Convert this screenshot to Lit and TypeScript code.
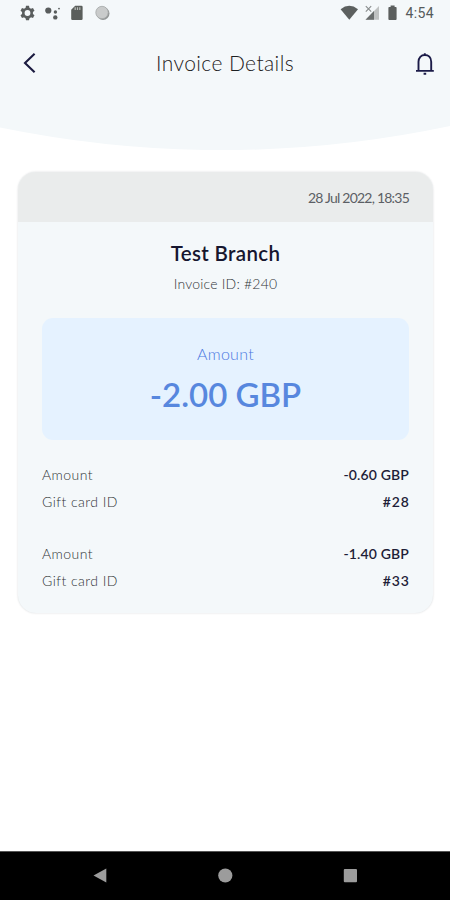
import { LitElement, html, css, svg } from "lit";
import { customElement } from "lit/decorators.js";

interface Entry {
  amount: string;
  card: string;
}

const entries: Entry[] = [
  { amount: "-0.60 GBP", card: "#28" },
  { amount: "-1.40 GBP", card: "#33" },
];

const gearTeeth = [0, 60, 120, 180, 240, 300];

@customElement("status-bar")
class StatusBar extends LitElement {
  static styles = css`
    :host { display: flex; justify-content: space-between; height: 26px; }
    svg { display: block; flex: none; }
    .left { display: flex; padding: 5px 0 0 19px; gap: 9px; }
    .right { display: flex; padding: 5px 16px 0 0; }
    .wifi { margin-right: 6px; }
    .signal { margin-right: 8px; }
    .battery { margin-right: 8px; }
    .time { font: 400 14px/17px Roboto, sans-serif; color: #565b5b; letter-spacing: 0.4px; }
  `;
  render() {
    return html`
      <div class="left">
        <svg width="16" height="16" viewBox="0 0 16 16">
          <circle cx="8.5" cy="8" r="4.2" fill="none" stroke="#5a5e5e" stroke-width="2.6" />
          ${gearTeeth.map(
            (a) => svg`<path d="M6.500 3.600 7 .8h3l.5 2.8z" fill="#5a5e5e" transform="rotate(${a} 8.5 8)" />`
          )}
        </svg>
        <svg width="16" height="16" viewBox="0 0 16 16" fill="#595d5d">
          <circle cx="4.3" cy="5.5" r="3.1" /><circle cx="11.4" cy="7" r="1.7" />
          <circle cx="15" cy="3.6" r="0.9" /><circle cx="11.3" cy="12.4" r="2.2" />
        </svg>
        <svg width="16" height="16" viewBox="0 0 16 16">
          <path d="M6.2.8h6.2q1.2 0 1.2 1.2v11.7q0 1.2-1.2 1.2H3.400q-1.200 0-1.200-1.200V4.800z" fill="#5a5e5b" />
          <path d="M6.200 2.300v2.600M8.500 2.300v2.600M10.800 2.300v2.600" stroke="#b9bdba" stroke-width="1.200" />
        </svg>
        <svg width="17" height="16" viewBox="0 0 17 16">
          <circle cx="9" cy="8.500" r="6.500" fill="#929595" />
          <circle cx="8" cy="7.500" r="6.200" fill="#c9cbcb" stroke="#a5a8a8" stroke-width="0.800" />
        </svg>
      </div>
      <div class="right">
        <svg class="wifi" width="19" height="16" viewBox="0 0 19 16">
          <path d="M.6 4.200Q9.300-2.600 18 4.200L9.300 14.800z" fill="#5c605f" />
        </svg>
        <svg class="signal" width="15" height="16" viewBox="0 0 15 16">
          <path d="M14 1V14.800H.5z" fill="#bfc2c2" />
          <path d="M9 6V14.800H.5z" fill="#6a6e6e" />
          <path d="M.8 1.200l5.400 5.400M6.200 1.200.8 6.600" stroke="#888c8c" stroke-width="1.100" />
        </svg>
        <svg class="battery" width="9" height="16" viewBox="0 0 9 16">
          <path d="M2.600.5h4v1.500h1.200q.8 0 .8.800v11.200q0 .9-.9.900H1.300q-.9 0-.9-.9V2.800q0-.8.800-.8h1.400z" fill="#5b5f5e" />
        </svg>
        <span class="time">4:54</span>
      </div>
    `;
  }
}

@customElement("title-bar")
class TitleBar extends LitElement {
  static styles = css`
    :host { display: grid; grid-template-columns: 60px 1fr 60px; align-items: center; height: 74px; }
    svg { display: block; }
    .back { margin-left: 22px; }
    .bell { justify-self: end; margin: 1px 15px 0 0; }
    .title { text-align: center; font-size: 21px; line-height: 26px; font-weight: 300; color: #1c2022; letter-spacing: 0.4px; }
  `;
  render() {
    return html`
      <svg class="back" width="16" height="22" viewBox="0 0 16 22">
        <path d="M12.600 1.800 3 11l9.600 9.200" fill="none" stroke="#1b1b40" stroke-width="2.100" />
      </svg>
      <span class="title">Invoice Details</span>
      <svg class="bell" width="20" height="24" viewBox="0 0 20 24" fill="none" stroke="#1b1b48" stroke-width="1.900">
        <path d="M3.500 18.600V9.800C3.500 5.500 6.200 3 9.800 3s6.400 2.500 6.400 6.800v8.800M1 18.900h17.800M8.600 21.700h2.600M9.800 1.200v2" />
      </svg>
    `;
  }
}

@customElement("invoice-card")
class InvoiceCard extends LitElement {
  static styles = css`
    :host {
      display: block; box-sizing: border-box; margin: 22px 17px 0 18px; height: 441px;
      background: #f4f8fa; border-radius: 18px; overflow: hidden;
      box-shadow: 0 0 2px rgba(60, 70, 75, 0.22);
    }
    .date {
      height: 50px; box-sizing: border-box; padding: 0 24px; background: #eaecec; text-align: right;
      font-size: 14px; line-height: 51px; color: #5c5f65; letter-spacing: -0.78px;
    }
    .branch {
      margin-top: 17px; text-align: center; font-size: 20.500px; line-height: 28px; font-weight: 600;
      color: #16162f; letter-spacing: 0.350px;
    }
    .invoice { margin-top: 6px; text-align: center; font-size: 14px; line-height: 22px; font-weight: 300; color: #303438; letter-spacing: 0.200px; }
    .total {
      margin: 23px 24px 0; height: 122px; box-sizing: border-box; padding-top: 25px;
      border-radius: 11px; background: #e5f2ff; text-align: center;
    }
    .label { font-size: 16px; line-height: 22px; font-weight: 300; color: #4a78df; letter-spacing: 0.300px; }
    .sum { margin-top: 8px; font-size: 33px; line-height: 42px; font-weight: 600; color: #5787de; }
    .entries { display: grid; gap: 25px; padding: 21px 24px 0; font-size: 14px; }
    .row { display: flex; justify-content: space-between; line-height: 27px; }
    .key { font-weight: 300; color: #303436; letter-spacing: 0.450px; }
    .value { color: #1e1e38; font-weight: 600; letter-spacing: 0.150px; }
    .card { letter-spacing: 0.900px; margin-right: -0.900px; }
  `;
  render() {
    return html`
      <div class="date">28 Jul 2022, 18:35</div>
      <div class="branch">Test Branch</div>
      <div class="invoice">Invoice ID: #240</div>
      <div class="total">
        <div class="label">Amount</div>
        <div class="sum">-2.00 GBP</div>
      </div>
      <div class="entries">
        ${entries.map(
          (e) => html`<div>
            <div class="row"><span class="key">Amount</span><span class="value">${e.amount}</span></div>
            <div class="row"><span class="key">Gift card ID</span><span class="value card">${e.card}</span></div>
          </div>`
        )}
      </div>
    `;
  }
}

@customElement("nav-bar")
class NavBar extends LitElement {
  static styles = css`
    :host {
      display: grid; grid-template-columns: repeat(3, 125px); justify-content: center; justify-items: center;
      align-items: center; height: 49px; box-sizing: border-box; background: #000; border-top: 1px solid #555;
    }
  `;
  render() {
    return html`
      <svg width="16" height="16" viewBox="0 0 16 16"><path d="M1.500 7.500 14.300.5v14z" fill="#9c9c9c" /></svg>
      <svg width="16" height="16" viewBox="0 0 16 16"><circle cx="8.300" cy="7.500" r="7.100" fill="#9c9c9c" /></svg>
      <svg width="16" height="16" viewBox="0 0 16 16"><rect x="1.800" y="1" width="13.200" height="13.200" rx="1" fill="#9c9c9c" /></svg>
    `;
  }
}

@customElement("app-root")
class AppRoot extends LitElement {
  static styles = css`
    :host {
      display: flex; flex-direction: column; width: 450px; height: 900px; background: #fff;
      font-family: Lato, "Liberation Sans", sans-serif; font-weight: 400;
    }
    .head { position: relative; height: 150px; flex: none; }
    .curve { position: absolute; inset: 0; }
    .bars { position: relative; }
    nav-bar { margin-top: auto; }
  `;
  render() {
    return html`
      <div class="head">
        <svg class="curve" width="450" height="150" viewBox="0 0 450 150">
          <path d="M0 0H450V126Q225 173.500 0 127.500z" fill="#f4f8fa" />
        </svg>
        <div class="bars">
          <status-bar></status-bar>
          <title-bar></title-bar>
        </div>
      </div>
      <invoice-card></invoice-card>
      <nav-bar></nav-bar>
    `;
  }
}
